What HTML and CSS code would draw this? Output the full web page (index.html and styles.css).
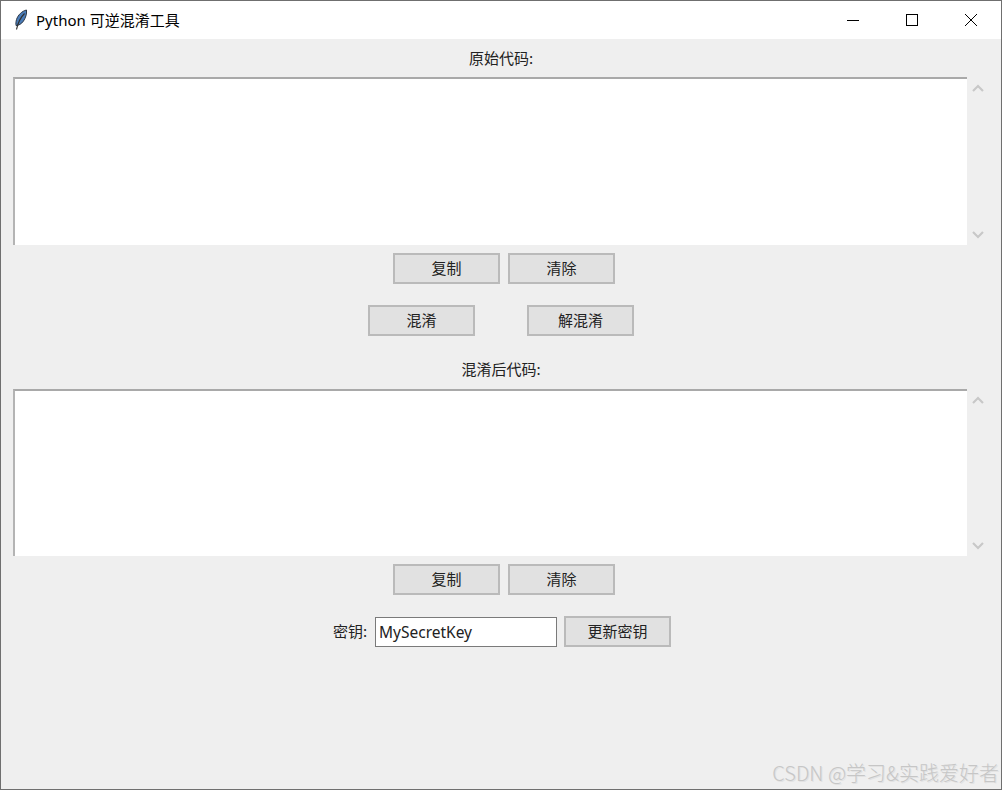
FILE: index.html
```html
<!DOCTYPE html>
<html lang="zh">
<head>
<meta charset="utf-8">
<title>Python 可逆混淆工具</title>
<link rel="stylesheet" href="styles.css">
</head>
<body>
<div class="window">
  <header class="titlebar">
    <svg class="feather" width="16" height="22" viewBox="0 0 16 22"><path d="M13.500 1C9 2 5 6 3.500 10.500 2.800 13 2.800 15 3 16.500c2.500 0 5.500-1.500 7.500-4.500 2-3 3.500-7 3-11z" fill="#4a7cb8" stroke="#2b3645" stroke-width="1"/><path d="M11.500 4.500C8 8 5 13 3.500 20.500" fill="none" stroke="#2f2f2f" stroke-width="1.200"/></svg>
    <span class="title">Python 可逆混淆工具</span>
    <div class="controls">
      <svg class="ctl" width="14" height="14" viewBox="0 0 14 14"><path d="M1 7.500h12" stroke="#000" fill="none"/></svg>
      <svg class="ctl" width="14" height="14" viewBox="0 0 14 14"><rect x="1.500" y="1.500" width="11" height="11" stroke="#000" fill="none"/></svg>
      <svg class="ctl" width="14" height="14" viewBox="0 0 14 14"><path d="M1 1l12 12M13 1L1 13" stroke="#000" fill="none"/></svg>
    </div>
  </header>
  <main class="content">
    <div class="label">原始代码:</div>
    <div class="editor-row">
      <div class="editor"></div>
      <div class="scrollbar">
        <svg width="14" height="9" viewBox="0 0 14 9"><path d="M2 7l5-5 5 5" stroke="#c8c8c8" stroke-width="2.200" fill="none"/></svg>
        <svg width="14" height="9" viewBox="0 0 14 9"><path d="M2 2l5 5 5-5" stroke="#c8c8c8" stroke-width="2.200" fill="none"/></svg>
      </div>
    </div>
    <div class="btn-row">
      <button class="btn">复制</button>
      <button class="btn">清除</button>
    </div>
    <div class="btn-row action-row">
      <button class="btn">混淆</button>
      <button class="btn">解混淆</button>
    </div>
    <div class="label label-second">混淆后代码:</div>
    <div class="editor-row editor-row-short">
      <div class="editor"></div>
      <div class="scrollbar">
        <svg width="14" height="9" viewBox="0 0 14 9"><path d="M2 7l5-5 5 5" stroke="#c8c8c8" stroke-width="2.200" fill="none"/></svg>
        <svg width="14" height="9" viewBox="0 0 14 9"><path d="M2 2l5 5 5-5" stroke="#c8c8c8" stroke-width="2.200" fill="none"/></svg>
      </div>
    </div>
    <div class="btn-row">
      <button class="btn">复制</button>
      <button class="btn">清除</button>
    </div>
    <div class="key-row">
      <span class="key-label">密钥:</span>
      <div class="key-input">MySecretKey</div>
      <button class="btn">更新密钥</button>
    </div>
  </main>
  <div class="watermark">CSDN @学习&amp;实践爱好者</div>
</div>
</body>
</html>
```
FILE: styles.css
```css
* { box-sizing: border-box; }
html, body { margin: 0; padding: 0; }
body { width: 1002px; height: 790px; overflow: hidden; font-family: "Noto Sans CJK SC", "Noto Sans", sans-serif; }
.window {
  position: relative;
  width: 1002px;
  height: 790px;
  background: #efefef;
  border: 1px solid #6f6f6f;
  display: flex;
  flex-direction: column;
}
.titlebar {
  height: 38px;
  background: #fff;
  display: flex;
  align-items: center;
  padding-left: 12px;
  flex: none;
}
.feather { margin-right: 7px; }
.title { font-size: 15px; color: #000; font-family: "Noto Sans", "Noto Sans CJK SC", sans-serif; position: relative; top: -1px; }
.controls { margin-left: auto; display: flex; gap: 45px; padding-right: 23px; align-items: center; }
.ctl { display: block; }
.content { flex: 1; display: flex; flex-direction: column; align-items: center; padding: 0 0 0 12px; }
.label {
  height: 38px;
  width: 100%;
  padding: 0 12px 2px 0;
  display: flex;
  align-items: center;
  justify-content: center;
  font-size: 15px;
  color: #222;
}
.label-second { margin-top: 15px; padding-bottom: 4px; }
.editor-row { display: flex; width: 100%; height: 168px; }
.editor-row-short { height: 167px; }
.editor {
  width: 954px;
  background: #fff;
  border-top: 2px solid #a9a9a9;
  border-left: 2px solid #b4b4b4;
}
.scrollbar {
  width: 21px;
  padding: 7px 0 6px;
  display: flex;
  flex-direction: column;
  justify-content: space-between;
  align-items: center;
}
.scrollbar svg { display: block; }
.btn-row { display: flex; gap: 8px; margin-top: 8px; width: 100%; justify-content: center; padding-right: 6px; }
.action-row { gap: 52px; margin-top: 21px; padding-right: 12px; }
.btn {
  width: 107px;
  height: 31px;
  padding: 0 0 3px;
  background: #e1e1e1;
  border: 2px solid #bababa;
  font: inherit;
  font-size: 15px;
  color: #222;
}
.key-row { display: flex; align-items: center; margin-top: 21px; width: 100%; padding-left: 320px; }
.key-label { width: 42px; font-size: 15px; color: #222; padding-bottom: 2px; }
.key-input {
  width: 182px;
  height: 30px;
  background: #fff;
  border: 1px solid #7a7a7a;
  padding-left: 3px;
  font-size: 15.500px;
  line-height: 28px;
  font-family: "Noto Sans", "Noto Sans CJK SC", sans-serif;
  color: #222;
  margin-right: 7px;
}
.watermark {
  position: absolute;
  right: 2px;
  bottom: 2px;
  font-size: 20px;
  font-weight: 300;
  color: #c6c6c6;
  text-shadow: 1px 1px 0 #e2e2e2;
  font-family: "Noto Sans CJK SC", "Noto Sans", sans-serif;
}
```
